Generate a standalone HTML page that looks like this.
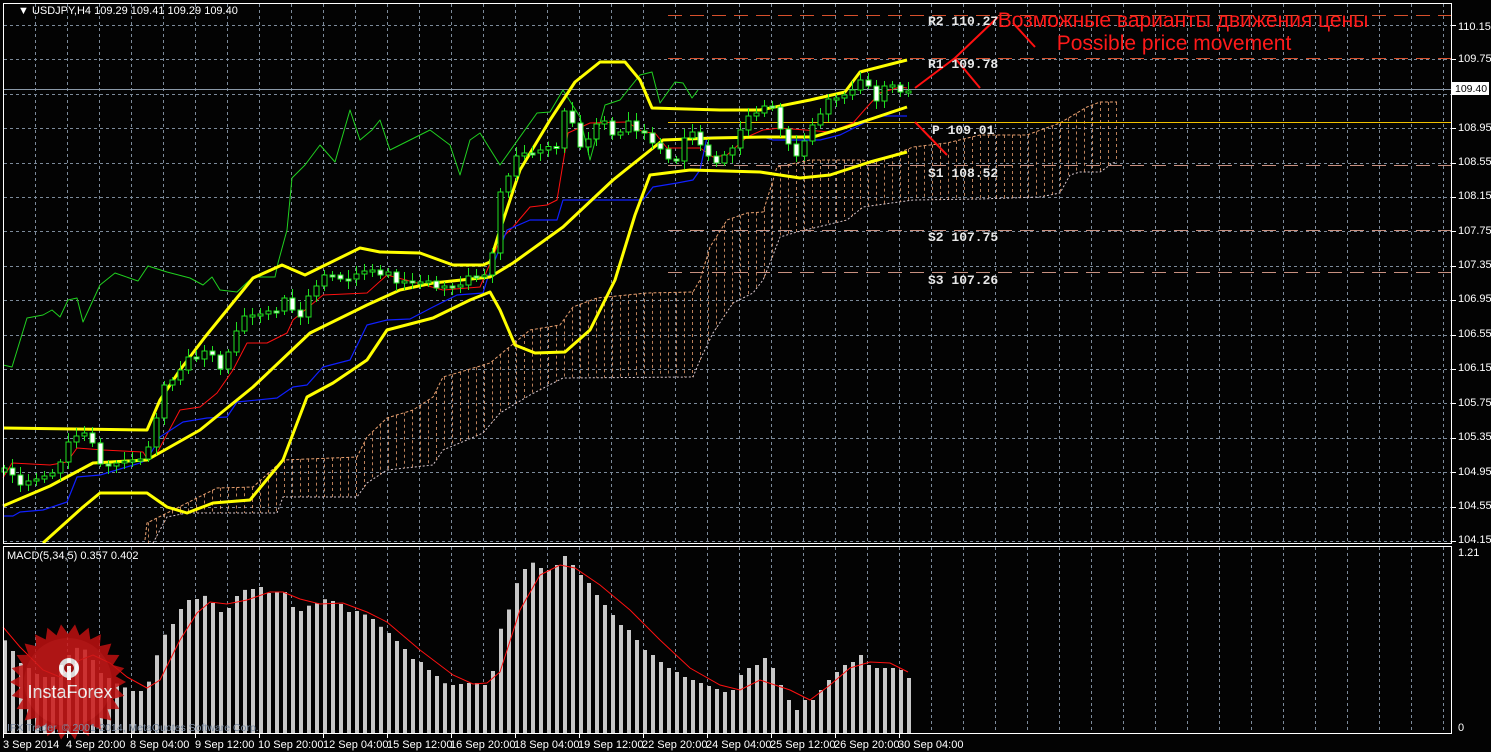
<!DOCTYPE html>
<html><head><meta charset="utf-8"><style>
html,body{margin:0;padding:0;background:#000;width:1491px;height:752px;overflow:hidden}
svg{display:block}
.ax{font-family:"Liberation Sans",sans-serif;font-size:11px;fill:#fff}
.pv{font-family:"Liberation Mono",monospace;font-size:13px;font-weight:bold;fill:#e8e8e8}
</style></head><body>
<svg id="s" width="1491" height="752" viewBox="0 0 1491 752" xmlns="http://www.w3.org/2000/svg">
<rect width="1491" height="752" fill="#030303"/>
<g id="grid" stroke="#7c8a9a" stroke-width="1" stroke-dasharray="3,3"></g>
<g id="cloud"></g>
<g stroke-width="1" fill="none">
<line x1="668" y1="15.5" x2="1451" y2="15.5" stroke="#d8502c" stroke-dasharray="14,8"/>
<line x1="668" y1="58.5" x2="1451" y2="58.5" stroke="#d8502c" stroke-dasharray="14,8"/>
<line x1="668" y1="122.5" x2="1451" y2="122.5" stroke="#f0c000"/>
<line x1="668" y1="165.5" x2="1451" y2="165.5" stroke="#c89080" stroke-dasharray="14,8"/>
<line x1="668" y1="230.5" x2="1451" y2="230.5" stroke="#c89080" stroke-dasharray="14,8"/>
<line x1="668" y1="272.5" x2="1451" y2="272.5" stroke="#c89080" stroke-dasharray="14,8"/>
<line x1="3" y1="89.5" x2="1451" y2="89.5" stroke="#8a98a8"/>
</g>
<g fill="none" stroke-linejoin="round">
<polyline stroke="#20d020" stroke-width="1" points="3,365 12,367 27,318 43,315 52,310 60,317 68,300 77,298 83,322 100,285 115,273 138,281 148,266 167,272 190,278 203,285 212,277 220,290 237,292 253,277 275,277 278,263 287,230 292,178 305,165 320,145 335,162 350,110 360,140 372,130 380,120 390,150 410,140 430,130 450,145 460,175 470,140 480,133 500,165 537,113 550,112 563,90 580,117 590,160 605,105 620,100 640,75 652,72 660,103 675,82 683,83 692,98 698,90"/>
<polyline stroke="#ff1010" stroke-width="1" points="3,478 12,463 50,465 67,462 77,448 103,450 143,452 148,460 157,453 180,410 200,407 217,393 233,370 247,343 267,343 287,333 293,320 323,295 367,293 387,275 417,283 443,290 480,287 500,240 513,227 530,207 547,205 557,200 568,133 590,123 627,122 643,132 655,133 667,148 700,148 713,157 727,155 747,137 763,130 780,128 830,132 853,123 867,107 880,93 900,87 907,88"/>
<polyline stroke="#1020ff" stroke-width="1.2" points="3,516 13,516 20,512 43,510 67,502 77,477 100,475 140,463 147,460 160,437 183,422 207,418 227,417 237,402 277,398 293,387 307,385 323,367 350,360 367,325 387,320 410,319 433,307 457,295 483,293 487,280 507,230 530,220 557,220 563,200 643,200 653,187 677,183 693,180 700,170 707,137 763,137 773,140 820,140 840,135 860,125 877,116 907,116"/>
<g stroke="#ffff00" stroke-width="3">
<polyline points="3,428 147,430 160,400 180,370 205,337 253,278 282,265 305,275 360,248 380,252 420,253 453,265 483,265 490,262 500,230 520,170 550,120 575,82 600,62 625,62 640,80 652,108 720,110 760,110 810,100 845,92 860,72 907,60"/>
<polyline points="3,506 50,486 93,463 147,460 200,430 253,387 310,333 367,305 400,290 433,283 490,277 513,263 563,227 613,180 663,140 713,138 763,137 813,137 847,127 907,107"/>
<polyline points="43,543 83,507 100,493 147,493 167,507 187,513 213,503 250,500 283,460 307,397 333,383 367,360 387,330 433,318 470,300 490,292 500,310 515,345 535,353 565,352 590,330 615,280 635,215 650,175 690,170 760,172 800,178 830,175 870,162 907,152"/>
</g>
</g>
<g id="candles"></g>
<g stroke="#ff1010" stroke-width="2" fill="none">
<polyline points="915,88 955,58 998,17"/>
<line x1="955" y1="58" x2="980" y2="88"/>
<line x1="1013" y1="23" x2="1035" y2="47"/>
<line x1="915" y1="122" x2="947" y2="155"/>
</g>
<text class="pv" x="928" y="25">R2 110.27</text>
<text class="pv" x="928" y="68">R1 109.78</text>
<text class="pv" x="932" y="134">P 109.01</text>
<text class="pv" x="928" y="177">S1 108.52</text>
<text class="pv" x="928" y="241">S2 107.75</text>
<text class="pv" x="928" y="284">S3 107.26</text>
<text x="1183" y="27" text-anchor="middle" font-family="Liberation Sans,sans-serif" font-size="21" fill="#ff1a1a">Возможные варианты движения цены</text>
<text x="1174" y="50" text-anchor="middle" font-family="Liberation Sans,sans-serif" font-size="21" fill="#ff1a1a">Possible price movement</text>
<g id="macd"></g>
<polyline fill="none" stroke="#ff1010" stroke-width="1" points="3,627 20,647 43,670 60,677 80,660 93,655 110,663 127,677 147,688 160,680 180,640 197,613 210,602 227,604 247,600 270,592 283,592 300,599 320,604 343,603 367,612 387,622 420,650 453,675 473,684 487,683 500,672 520,610 540,575 560,565 575,568 600,585 630,610 660,640 690,668 720,685 740,690 760,680 790,690 810,700 830,685 850,668 870,662 890,663 908,672"/>
<g opacity="0.85">
<polygon id="star" fill="#c01010"/>
<circle cx="68" cy="682" r="44" fill="#d42020" opacity="0.6"/>
<g transform="translate(69,668)" fill="#fff">
<circle r="10"/><circle r="5" fill="#b01010"/>
<rect x="-2" y="-2" width="4" height="14" fill="#fff"/>
</g>
<text x="70" y="698" text-anchor="middle" font-family="Liberation Sans,sans-serif" font-size="18" fill="#fff">InstaForex</text>
</g>
<text x="7" y="731" font-family="Liberation Sans,sans-serif" font-size="10.5" fill="#7a8aa0">IFX Trader, © 2001-2014, MetaQuotes Software Corp.</text>
<g stroke="#fff" fill="none" stroke-width="1">
<rect x="3.5" y="3.5" width="1448" height="540"/>
<rect x="3.5" y="546.5" width="1448" height="187"/>
</g>
<text class="ax" x="18" y="14" font-size="10">▼ USDJPY,H4  109.29 109.41 109.29 109.40</text>
<text class="ax" x="7" y="559">MACD(5,34,5) 0.357 0.402</text>
<g id="axis"></g>
<rect x="1452" y="82" width="37" height="13" fill="#fff"/>
<text x="1455" y="92" font-family="Liberation Sans,sans-serif" font-size="10.5" fill="#000">109.40</text>
<text class="ax" x="1458" y="556">1.21</text>
<text class="ax" x="1458" y="731">0</text>
<g class="ax">
<text x="1458" y="30">110.15</text><text x="1458" y="62">109.75</text><text x="1458" y="131">108.95</text><text x="1458" y="165">108.55</text><text x="1458" y="199">108.15</text><text x="1458" y="234">107.75</text><text x="1458" y="268">107.35</text><text x="1458" y="302">106.95</text><text x="1458" y="337">106.55</text><text x="1458" y="371">106.15</text><text x="1458" y="406">105.75</text><text x="1458" y="440">105.35</text><text x="1458" y="475">104.95</text><text x="1458" y="509">104.55</text><text x="1458" y="543">104.15</text>
</g>
<g class="ax" font-size="10.5">
<text x="3" y="748">3 Sep 2014</text><text x="66" y="748">4 Sep 20:00</text><text x="130" y="748">8 Sep 04:00</text><text x="195" y="748">9 Sep 12:00</text><text x="258" y="748">10 Sep 20:00</text><text x="323" y="748">12 Sep 04:00</text><text x="387" y="748">15 Sep 12:00</text><text x="450" y="748">16 Sep 20:00</text><text x="514" y="748">18 Sep 04:00</text><text x="578" y="748">19 Sep 12:00</text><text x="642" y="748">22 Sep 20:00</text><text x="706" y="748">24 Sep 04:00</text><text x="770" y="748">25 Sep 12:00</text><text x="834" y="748">26 Sep 20:00</text><text x="898" y="748">30 Sep 04:00</text>
</g>
</svg>
<script>
(function(){
var NS="http://www.w3.org/2000/svg";
function el(p,t,a){var e=document.createElementNS(NS,t);for(var k in a)e.setAttribute(k,a[k]);p.appendChild(e);return e;}
function interp(pts,x){for(var j=0;j<pts.length-1;j++){if(x>=pts[j][0]&&x<=pts[j+1][0]){var t=(x-pts[j][0])/(pts[j+1][0]-pts[j][0]||1);return pts[j][1]+t*(pts[j+1][1]-pts[j][1]);}}return x<pts[0][0]?pts[0][1]:pts[pts.length-1][1];}
function P(s){return s.trim().split(/\s+/).map(function(q){return q.split(',').map(Number);});}
var g=document.getElementById('grid'),x,i,y;
for(x=35;x<=1444;x+=32){el(g,'line',{x1:x+.5,y1:4,x2:x+.5,y2:543});el(g,'line',{x1:x+.5,y1:547,x2:x+.5,y2:733});}
for(i=0;i<16;i++){y=Math.round(25+34.4*i)+.5;el(g,'line',{x1:4,y1:y,x2:1451,y2:y});}
var cg=document.getElementById('cloud');
var A=P("145,540 147,523 217,488 253,487 283,460 357,457 367,437 387,418 413,410 433,397 443,377 457,373 490,363 530,330 560,325 573,307 597,298 647,293 693,292 700,280 710,247 727,220 747,213 763,212 770,190 777,167 810,160 863,160 873,163 913,147 947,143 980,135 1027,135 1060,123 1087,107 1100,102 1117,102");
var B=P("153,543 167,517 187,513 277,513 283,497 357,497 367,483 387,470 433,465 443,450 467,440 483,433 500,413 530,395 563,378 693,377 700,360 713,333 733,303 753,293 763,280 770,263 780,237 797,232 847,220 863,207 913,200 980,199 1040,197 1060,193 1070,175 1080,172 1100,172 1113,163 1117,162");
el(cg,'polyline',{points:A.map(String).join(' '),fill:'none',stroke:'#e8a070','stroke-dasharray':'3,2'});
el(cg,'polyline',{points:B.map(String).join(' '),fill:'none',stroke:'#d8c8d0','stroke-dasharray':'2,2'});
for(x=148;x<=1116;x+=8){var a=interp(A,x),b=interp(B,x);el(cg,'line',{x1:x+.5,y1:a,x2:x+.5,y2:b,stroke:a<b?'#e8a070':'#d8c8d0','stroke-dasharray':'3,3','stroke-width':1,opacity:.8});}
var C=P("4,470 12,475 20,483 28,482 36,478 44,478 52,473 60,460 68,443 76,435 84,435 92,443 100,462 108,467 116,462 124,463 132,460 140,457 148,448 156,417 164,387 172,380 180,368 188,358 196,358 204,353 212,355 220,367 228,353 236,330 244,318 260,312 268,312 276,310 284,300 292,310 300,315 308,297 316,285 324,277 332,275 340,277 348,280 356,273 364,273 372,270 380,273 388,273 396,282 404,283 412,283 420,280 428,282 436,287 444,288 452,287 460,283 468,277 476,275 484,277 492,253 500,190 508,177 516,155 524,155 532,153 540,148 556,147 564,113 572,123 580,145 588,140 596,123 604,123 612,135 620,130 628,122 636,130 644,135 652,143 660,147 668,160 676,160 684,140 692,132 700,143 708,157 716,162 724,157 732,148 740,128 748,117 756,112 764,108 772,107 780,127 788,145 796,155 804,143 812,125 820,112 828,100 836,97 844,97 852,90 860,78 868,87 876,100 884,88 892,85 900,90 908,92");
var cd=document.getElementById('candles');var prev=472;
for(i=0;i<=113;i++){x=4+8*i;var c=interp(C,x)+((i*7)%5-2);var o=prev;var tp=Math.min(o,c),bt=Math.max(o,c);if(bt-tp<2){bt=tp+2;}
var hi=tp-3-((i*13)%7),lo=bt+3+((i*11)%6);
el(cd,'line',{x1:x+.5,y1:hi,x2:x+.5,y2:lo,stroke:'#20e020','stroke-width':1});
el(cd,'rect',{x:x-2,y:tp,width:5,height:bt-tp,fill:c<o?'#000':'#fff',stroke:'#20e020','stroke-width':1});prev=c;}
var M=P("3,639 12,651 20,663 28,668 36,674 43,677 52,677 60,665 68,655 77,647 85,650 92,660 100,673 108,678 115,683 123,687 132,691 140,691 147,685 155,658 163,636 172,624 180,609 188,600 196,599 203,595 212,603 220,612 228,608 236,596 243,590 252,589 260,587 268,593 276,592 284,592 292,607 300,611 307,606 316,603 323,599 332,601 340,604 348,612 356,611 363,614 372,619 379,626 388,633 396,641 404,649 412,659 419,661 428,670 436,676 443,683 452,685 460,684 468,683 476,683 484,685 492,671 499,631 507,613 515,585 523,570 531,562 540,568 548,570 556,565 564,556 572,565 580,575 588,583 596,595 604,605 612,615 620,625 628,630 636,640 644,650 652,655 660,662 668,668 676,672 684,677 692,680 700,683 708,686 716,689 724,692 732,690 740,675 748,668 756,665 764,658 772,668 780,685 788,700 796,710 804,700 812,700 820,690 828,680 836,672 844,665 852,662 860,655 868,665 876,668 884,668 892,668 900,670 908,678");
var mg=document.getElementById('macd');
for(i=0;i<=113;i++){x=4+8*i;var t=interp(M,x);el(mg,'rect',{x:x-1,y:t,width:4,height:733-t,fill:'#c8c8c8'});}
var s=[],n=26;for(i=0;i<2*n;i++){var r=i%2?48:58,an=Math.PI*i/n;s.push((68+r*Math.cos(an)).toFixed(1)+','+(682+r*Math.sin(an)).toFixed(1));}
document.getElementById('star').setAttribute('points',s.join(' '));
var ag=document.getElementById('axis');
for(i=0;i<16;i++){y=Math.round(25+34.4*i)+.5;el(ag,'line',{x1:1452,y1:y,x2:1456,y2:y,stroke:'#fff'});}
[3,67,131,195,259,323,387,451,515,579,643,707,771,835,899].forEach(function(q){el(ag,'line',{x1:q+.5,y1:734,x2:q+.5,y2:738,stroke:'#fff'});});
})();
</script>
</body></html>
